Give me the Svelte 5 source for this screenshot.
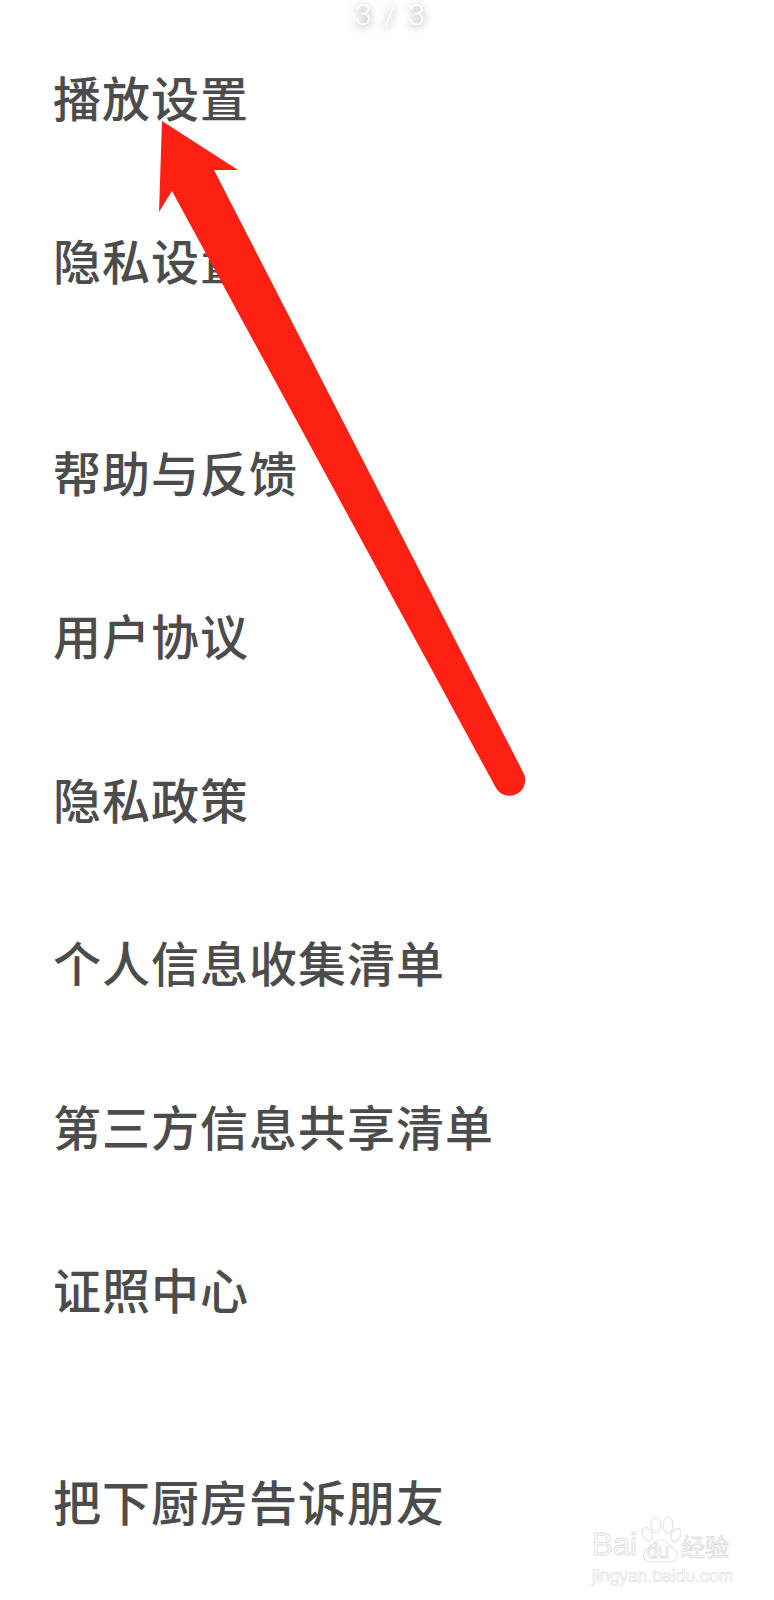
<script>
  const groups = [
    ['播放设置', '隐私设置'],
    ['帮助与反馈', '用户协议', '隐私政策', '个人信息收集清单', '第三方信息共享清单', '证照中心'],
    ['把下厨房告诉朋友']
  ];
</script>

<div class="page">
  <div class="counter">3 / 3</div>

  <div class="list">
    {#each groups as rows}
      <div class="group">
        {#each rows as label}
          <div class="row">{label}</div>
        {/each}
      </div>
    {/each}
  </div>

  <svg class="arrow" width="774" height="1600" viewBox="0 0 774 1600">
    <path
      d="M162 121 L238 170 L214 170 L523 772 A15 15 0 0 1 496 788 L172 191 L159 212 Z"
      fill="#fd2114"
    />
  </svg>

  <div class="mark">
    <div class="mark-logo">
      <span class="bai">Bai</span>
      <div class="paw">
        <svg width="40" height="47" viewBox="0 0 40 47" fill="#fff" stroke="#e4e4e4" stroke-width="1.2">
          <ellipse cx="6" cy="18" rx="4.5" ry="7" transform="rotate(-25 6 18)" />
          <ellipse cx="15" cy="9" rx="5" ry="8" />
          <ellipse cx="27" cy="9" rx="5" ry="8" />
          <ellipse cx="35" cy="19" rx="4.5" ry="7" transform="rotate(25 35 19)" />
          <path d="M19 24 C13 24 11 30 6 33 C0 38 2 46 10 46 L28 46 C36 46 39 38 33 33 C28 30 25 24 19 24 Z" />
        </svg>
        <span class="du">du</span>
      </div>
      <span class="jy">经验</span>
    </div>
    <div class="mark-url">jingyan.baidu.com</div>
  </div>
</div>

<style>
  :global(body) {
    margin: 0;
    background: #fff;
  }
  .page {
    position: relative;
    width: 774px;
    height: 1600px;
    overflow: hidden;
    background: #fff;
    font-family: "Noto Sans CJK SC", "Liberation Sans", sans-serif;
  }
  .counter {
    position: absolute;
    top: 0;
    left: 0;
    width: 100%;
    box-sizing: border-box;
    padding-left: 6px;
    text-align: center;
    font-size: 30px;
    line-height: 30px;
    font-weight: 300;
    word-spacing: 5px;
    color: #fff;
    text-shadow: 0 2px 9px rgba(0, 0, 0, 0.55);
    font-family: Roboto, sans-serif;
  }
  .list {
    padding-top: 16px;
  }
  .group {
    margin-bottom: 48px;
  }
  .row {
    height: 163.45px;
    line-height: 160px;
    padding-left: 53px;
    font-size: 48px;
    font-weight: 500;
    letter-spacing: 1px;
    color: #4c4c4c;
  }
  .arrow {
    position: absolute;
    top: 0;
    left: 0;
  }
  .mark {
    position: absolute;
    left: 592px;
    top: 1516px;
    width: 140px;
    font-family: "Liberation Sans", sans-serif;
    color: #fff;
    -webkit-text-stroke: 1px #e0e0e0;
  }
  .mark-logo {
    display: flex;
    align-items: flex-end;
    height: 47px;
    white-space: nowrap;
  }
  .bai {
    font-size: 31px;
    line-height: 36px;
    width: 49px;
  }
  .paw {
    position: relative;
    width: 40px;
    height: 47px;
  }
  .paw svg {
    display: block;
  }
  .du {
    position: absolute;
    left: 6px;
    bottom: 2px;
    font-size: 20px;
    line-height: 20px;
    -webkit-text-stroke: 0.8px #dcdcdc;
  }
  .jy {
    font-size: 24px;
    line-height: 34px;
    font-family: "Noto Sans CJK SC", sans-serif;
  }
  .mark-url {
    margin-top: 3px;
    font-size: 17.5px;
    line-height: 20px;
    white-space: nowrap;
    -webkit-text-stroke: 0.7px #e4e4e4;
  }
</style>
